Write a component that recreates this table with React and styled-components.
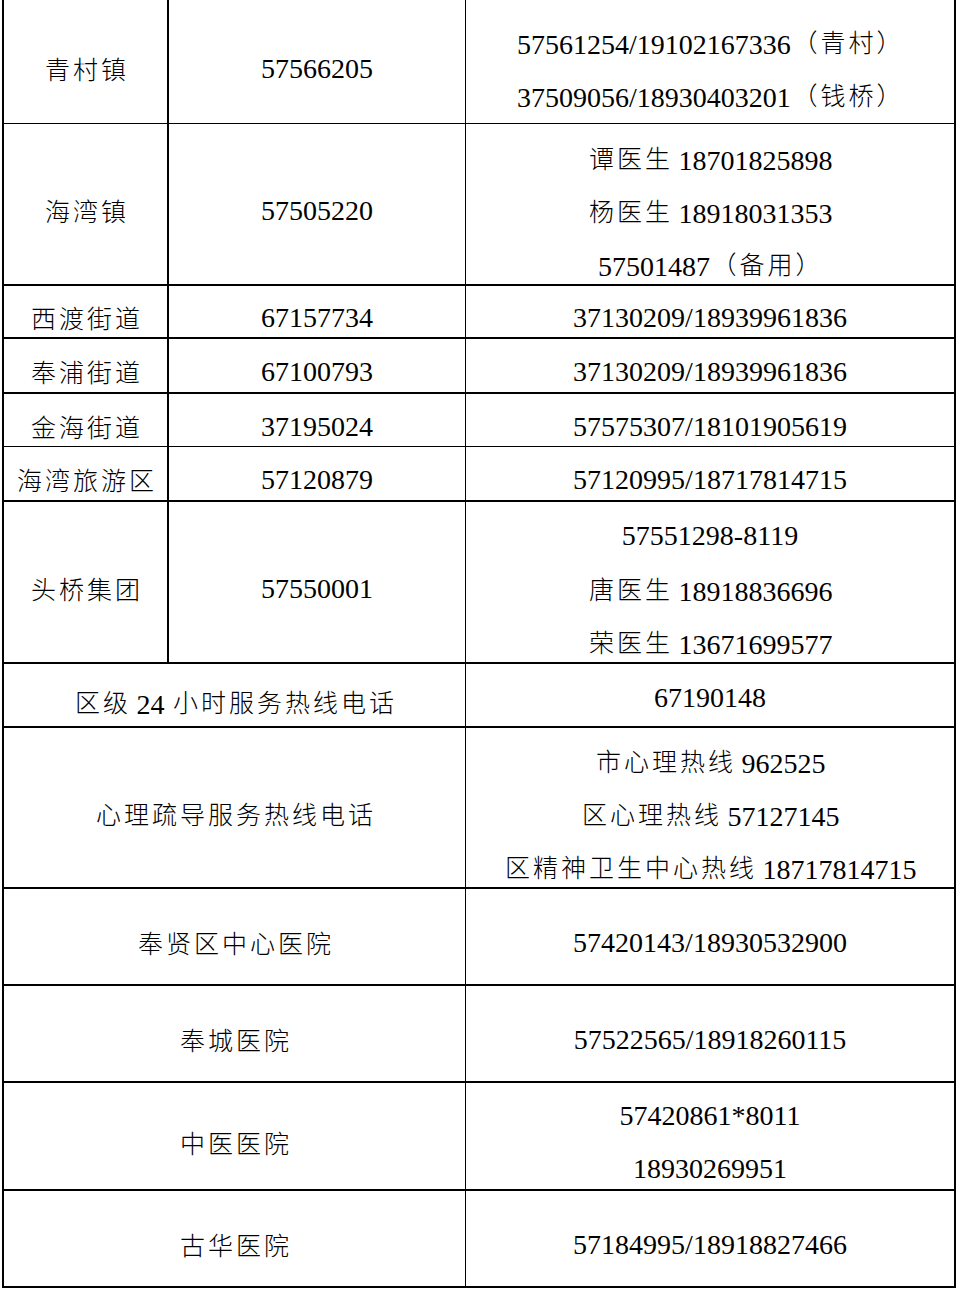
import React from "react";
import styled, { createGlobalStyle } from "styled-components";

const Global = createGlobalStyle`
  html, body { margin: 0; padding: 0; background: #fff; }
  body { font-family: "Liberation Serif", "Noto Sans CJK SC", serif; color: #000; }
`;

const Page = styled.div`
  height: 1291px;
  overflow: hidden;
  padding-left: 2px;
  box-sizing: border-box;
`;

const Table = styled.section`
  margin-top: -20px;
  width: 954px;
  border-left: 2px solid #000;
  display: flex;
  flex-direction: column;
  box-sizing: border-box;
`;

const Row = styled.div`
  display: grid;
  grid-template-columns: ${(p) => (p.$merged ? "462px 490px" : "165px 297px 490px")};
  grid-template-rows: minmax(0, 1fr);
  height: ${(p) => p.$h}px;
  min-height: 0;
  flex: 0 0 ${(p) => p.$h}px;
`;

const Cell = styled.div`
  box-sizing: border-box;
  min-height: 0;
  border-bottom: ${(p) => p.$bt}px solid #000;
  border-right: ${(p) => p.$br}px solid #000;
  padding-top: ${(p) => p.$pt}px;
  display: flex;
  flex-direction: column;
  align-items: center;
  justify-content: center;
  font-size: 28px;
  line-height: 53px;
  text-align: center;
  white-space: nowrap;
  overflow: visible;
`;

const Line = styled.div`
  height: 53px;
  flex: 0 0 53px;
`;

const Han = styled.span`
  font-family: "Noto Sans CJK SC", sans-serif;
  font-weight: 300;
  font-size: 25px;
  letter-spacing: 3px;
  padding-left: 1.5px;
  margin-right: -1.5px;
  vertical-align: 1.5px;
`;

const rows = [
  { h: 144, bt: 1, pt: 33, c: [["青村镇"], ["57566205"], ["57561254/19102167336（青村）", "37509056/18930403201（钱桥）"]] },
  { h: 162, bt: 2, c: [["海湾镇"], ["57505220"], ["谭医生 18701825898", "杨医生 18918031353", "57501487（备用）"]] },
  { h: 53, bt: 2, c: [["西渡街道"], ["67157734"], ["37130209/18939961836"]] },
  { h: 55, bt: 2, c: [["奉浦街道"], ["67100793"], ["37130209/18939961836"]] },
  { h: 53, bt: 1, c: [["金海街道"], ["37195024"], ["57575307/18101905619"]] },
  { h: 55, bt: 2, c: [["海湾旅游区"], ["57120879"], ["57120995/18717814715"]] },
  { h: 162, bt: 2, c: [["头桥集团"], ["57550001"], ["57551298-8119", "唐医生 18918836696", "荣医生 13671699577"]] },
  { h: 64, bt: 2, merged: true, rpt: 4, c: [["区级 24 小时服务热线电话"], ["67190148"]] },
  { h: 161, bt: 2, merged: true, c: [["心理疏导服务热线电话"], ["市心理热线 962525", "区心理热线 57127145", "区精神卫生中心热线 18717814715"]] },
  { h: 97, bt: 2, merged: true, c: [["奉贤区中心医院"], ["57420143/18930532900"]] },
  { h: 97, bt: 2, merged: true, c: [["奉城医院"], ["57522565/18918260115"]] },
  { h: 108, bt: 2, merged: true, c: [["中医医院"], ["57420861*8011", "18930269951"]] },
  { h: 97, bt: 2, merged: true, c: [["古华医院"], ["57184995/18918827466"]] },
];

const HAN_RE = /([\u3000-\u303f\u4e00-\u9fff\uff00-\uffef]+)/;

function Text({ children }) {
  return children
    .split(HAN_RE)
    .filter(Boolean)
    .map((seg, i) => (HAN_RE.test(seg) ? <Han key={i}>{seg}</Han> : <React.Fragment key={i}>{seg}</React.Fragment>));
}

export default function App() {
  return (
    <Page>
      <Global />
      <Table>
        {rows.map((r, i) => {
          const n = r.c.length;
          return (
            <Row key={i} $h={r.h} $merged={r.merged}>
              {r.c.map((lines, j) => {
                const last = j === n - 1;
                const br = last ? 2 : j === n - 2 ? 1 : 2;
                const pt = (r.pt || 12) - (last && r.rpt ? r.rpt * 2 : 0);
                return (
                  <Cell key={j} $bt={r.bt} $br={br} $pt={pt}>
                    {lines.map((t, k) => (
                      <Line key={k}>
                        <Text>{t}</Text>
                      </Line>
                    ))}
                  </Cell>
                );
              })}
            </Row>
          );
        })}
      </Table>
    </Page>
  );
}
